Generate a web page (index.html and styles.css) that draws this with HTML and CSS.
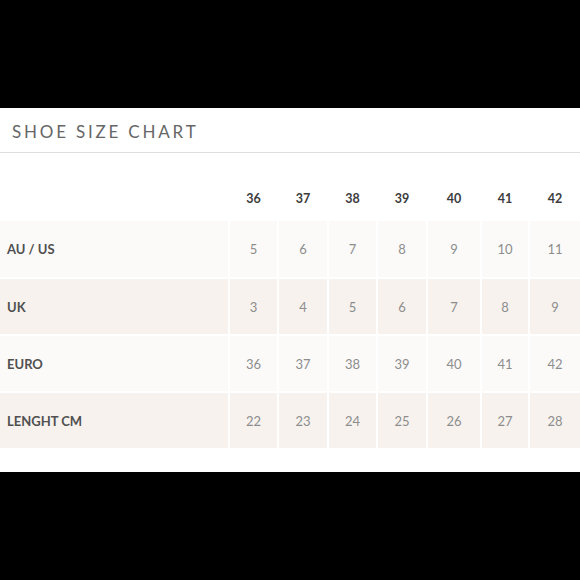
FILE: index.html
```html
<!DOCTYPE html>
<html>
<head>
<meta charset="utf-8">
<link rel="stylesheet" href="styles.css">
</head>
<body>
<div class="top"></div>
<section class="panel">
  <h1 class="title">SHOE SIZE CHART</h1>
  <div class="chart">
    <div class="hd label"></div>
    <div class="hd">36</div><div class="hd">37</div><div class="hd">38</div><div class="hd">39</div><div class="hd">40</div><div class="hd">41</div><div class="hd">42</div>

    <div class="c label light">AU / US</div>
    <div class="c light">5</div><div class="c light">6</div><div class="c light">7</div><div class="c light">8</div><div class="c light">9</div><div class="c light">10</div><div class="c light">11</div>

    <div class="c label beige">UK</div>
    <div class="c beige">3</div><div class="c beige">4</div><div class="c beige">5</div><div class="c beige">6</div><div class="c beige">7</div><div class="c beige">8</div><div class="c beige">9</div>

    <div class="c label light">EURO</div>
    <div class="c light">36</div><div class="c light">37</div><div class="c light">38</div><div class="c light">39</div><div class="c light">40</div><div class="c light">41</div><div class="c light">42</div>

    <div class="c label beige">LENGHT CM</div>
    <div class="c beige">22</div><div class="c beige">23</div><div class="c beige">24</div><div class="c beige">25</div><div class="c beige">26</div><div class="c beige">27</div><div class="c beige">28</div>
  </div>
</section>
<div class="bottom"></div>
</body>
</html>
```

FILE: styles.css
```css
html, body {
  margin: 0;
  padding: 0;
  background: #000;
  font-family: "Lato", "Liberation Sans", sans-serif;
}
.top { height: 108px; }
.panel {
  background: #fff;
  height: 364px;
  box-sizing: border-box;
}
.title {
  margin: 0;
  height: 45px;
  box-sizing: border-box;
  padding: 14px 0 0 12px;
  font-size: 17px;
  font-weight: 400;
  letter-spacing: 2.8px;
  color: #666;
  line-height: 20px;
  border-bottom: 1px solid #dedede;
}
.chart {
  display: grid;
  grid-template-columns: 228px 47px 48px 47px 48px 52px 46px 50px;
  grid-template-rows: 66px 56px 55px 55px 55px;
  column-gap: 2px;
  row-gap: 2px;
}
.hd {
  display: flex;
  align-items: flex-end;
  justify-content: center;
  padding-bottom: 13px;
  font-weight: 700;
  font-size: 12.5px;
  color: #3c3c3c;
}
.c {
  display: flex;
  align-items: center;
  justify-content: center;
  font-size: 13px;
  color: #8d8d8d;
}
.c.label {
  justify-content: flex-start;
  padding-left: 7px;
  font-weight: 700;
  font-size: 13px;
  color: #505050;
}
.light { background: #fbfaf9; }
.beige { background: #f7f2ee; }
```
